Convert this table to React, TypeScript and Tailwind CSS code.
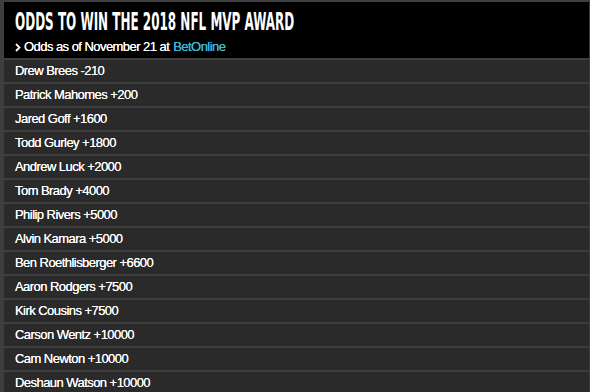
import React from "react";

const rows = [
  "Drew Brees -210",
  "Patrick Mahomes +200",
  "Jared Goff +1600",
  "Todd Gurley +1800",
  "Andrew Luck +2000",
  "Tom Brady +4000",
  "Philip Rivers +5000",
  "Alvin Kamara +5000",
  "Ben Roethlisberger +6600",
  "Aaron Rodgers +7500",
  "Kirk Cousins +7500",
  "Carson Wentz +10000",
  "Cam Newton +10000",
  "Deshaun Watson +10000",
];

const sans = '"Liberation Sans", Arial, sans-serif';

export default function App() {
  return (
    <div className="w-[590px] h-[392px] overflow-hidden bg-[#3e3e3e] pt-[2px] pl-[4px] pr-[1px]">
      <div className="bg-black h-[56px] pl-[11px] pt-[7px]">
        <div
          className="inline-block origin-left scale-x-[0.555] whitespace-nowrap text-[24px] leading-[26px] font-bold text-white"
          style={{ fontFamily: '"DejaVu Sans Condensed", "DejaVu Sans", sans-serif' }}
        >
          ODDS TO WIN THE 2018 NFL MVP AWARD
        </div>
        <div
          className="mt-[3px] flex items-center text-[13px] leading-[16px] tracking-[-0.55px] text-white [text-shadow:0_0_0.6px_white]"
          style={{ fontFamily: sans }}
        >
          <svg width="6" height="9" viewBox="0 0 6 9" className="mr-[3px]">
            <path d="M1 1 L4.5 4.5 L1 8" stroke="white" strokeWidth="1.8" fill="none" />
          </svg>
          <span>Odds as of November 21 at</span>
          <span className="ml-[4px] text-[#3cb9da] [text-shadow:0_0_0.6px_#3cb9da]">BetOnline</span>
        </div>
      </div>
      <div className="flex flex-col gap-[2px] pt-[2px]">
        {rows.map((r) => (
          <div
            key={r}
            className="h-[22px] bg-[#2a2a2a] pl-[11px] flex items-center text-[13px] tracking-[-0.55px] text-white [text-shadow:0_0_0.6px_white]"
            style={{ fontFamily: sans }}
          >
            {r}
          </div>
        ))}
      </div>
    </div>
  );
}
